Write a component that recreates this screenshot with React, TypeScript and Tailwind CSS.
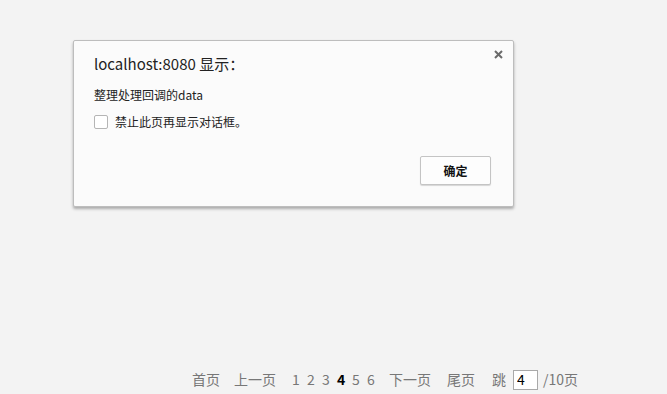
import React from "react";

const FONT = { fontFamily: '"Noto Sans CJK SC", "Noto Sans", sans-serif' };

function AlertDialog() {
  return (
    <div
      className="absolute left-[73px] top-[40px] h-[167px] w-[441px] rounded-[2px] border border-[#bdbdbd] bg-[#fbfbfb] shadow-[0_2px_3px_rgba(0,0,0,0.3)]"
      style={FONT}
    >
      <button className="absolute right-[10px] top-[9px] text-[#6a6a6a]">
        <svg width="9" height="9" viewBox="0 0 9 9">
          <path d="M1 1L8 8M8 1L1 8" stroke="currentColor" strokeWidth="2" />
        </svg>
      </button>
      <div className="pl-[20px] pt-[12px]">
        <div className="text-[15px] leading-[22px] text-[#222]">localhost:8080 显示：</div>
        <div className="mt-[12px] text-[12px] leading-[16px] text-[#222]">整理处理回调的data</div>
        <label className="mt-[11px] flex items-center gap-[7px] text-[12px] leading-[16px] text-[#222]">
          <span className="h-[14px] w-[14px] rounded-[2px] border border-[#b5b5b5] bg-white" />
          禁止此页再显示对话框。
        </label>
      </div>
      <div className="mt-[26px] flex justify-end pr-[22px]">
        <button className="h-[29px] w-[71px] rounded-[2px] border border-[#c4c4c4] bg-[#fdfdfd] text-[12px] font-bold text-[#111] shadow-[0_1px_1px_rgba(0,0,0,0.15)]">
          确定
        </button>
      </div>
    </div>
  );
}

function Pager() {
  const pages = [1, 2, 3, 4, 5, 6];
  return (
    <div className="flex items-center pl-[192px] text-[14px] text-[#777]" style={FONT}>
      <span>首页</span>
      <span className="ml-[14px]">上一页</span>
      <div className="ml-[16px] flex">
        {pages.map((p) => (
          <span key={p} className={p === 4 ? "w-[15px] font-bold text-black" : "w-[15px]"}>
            {p}
          </span>
        ))}
      </div>
      <span className="ml-[7px]">下一页</span>
      <span className="ml-[16px]">尾页</span>
      <span className="ml-[17px]">跳</span>
      <input
        readOnly
        value="4"
        className="ml-[7px] h-[20px] w-[25px] border border-[#a9a9a9] bg-white px-[3px] text-[14px] text-black outline-none"
      />
      <span className="ml-[5px]">/10页</span>
    </div>
  );
}

export default function App() {
  return (
    <div className="relative flex h-[394px] w-full flex-col bg-[#f3f3f3]">
      <AlertDialog />
      <div className="mt-auto pb-[4px]">
        <Pager />
      </div>
    </div>
  );
}
